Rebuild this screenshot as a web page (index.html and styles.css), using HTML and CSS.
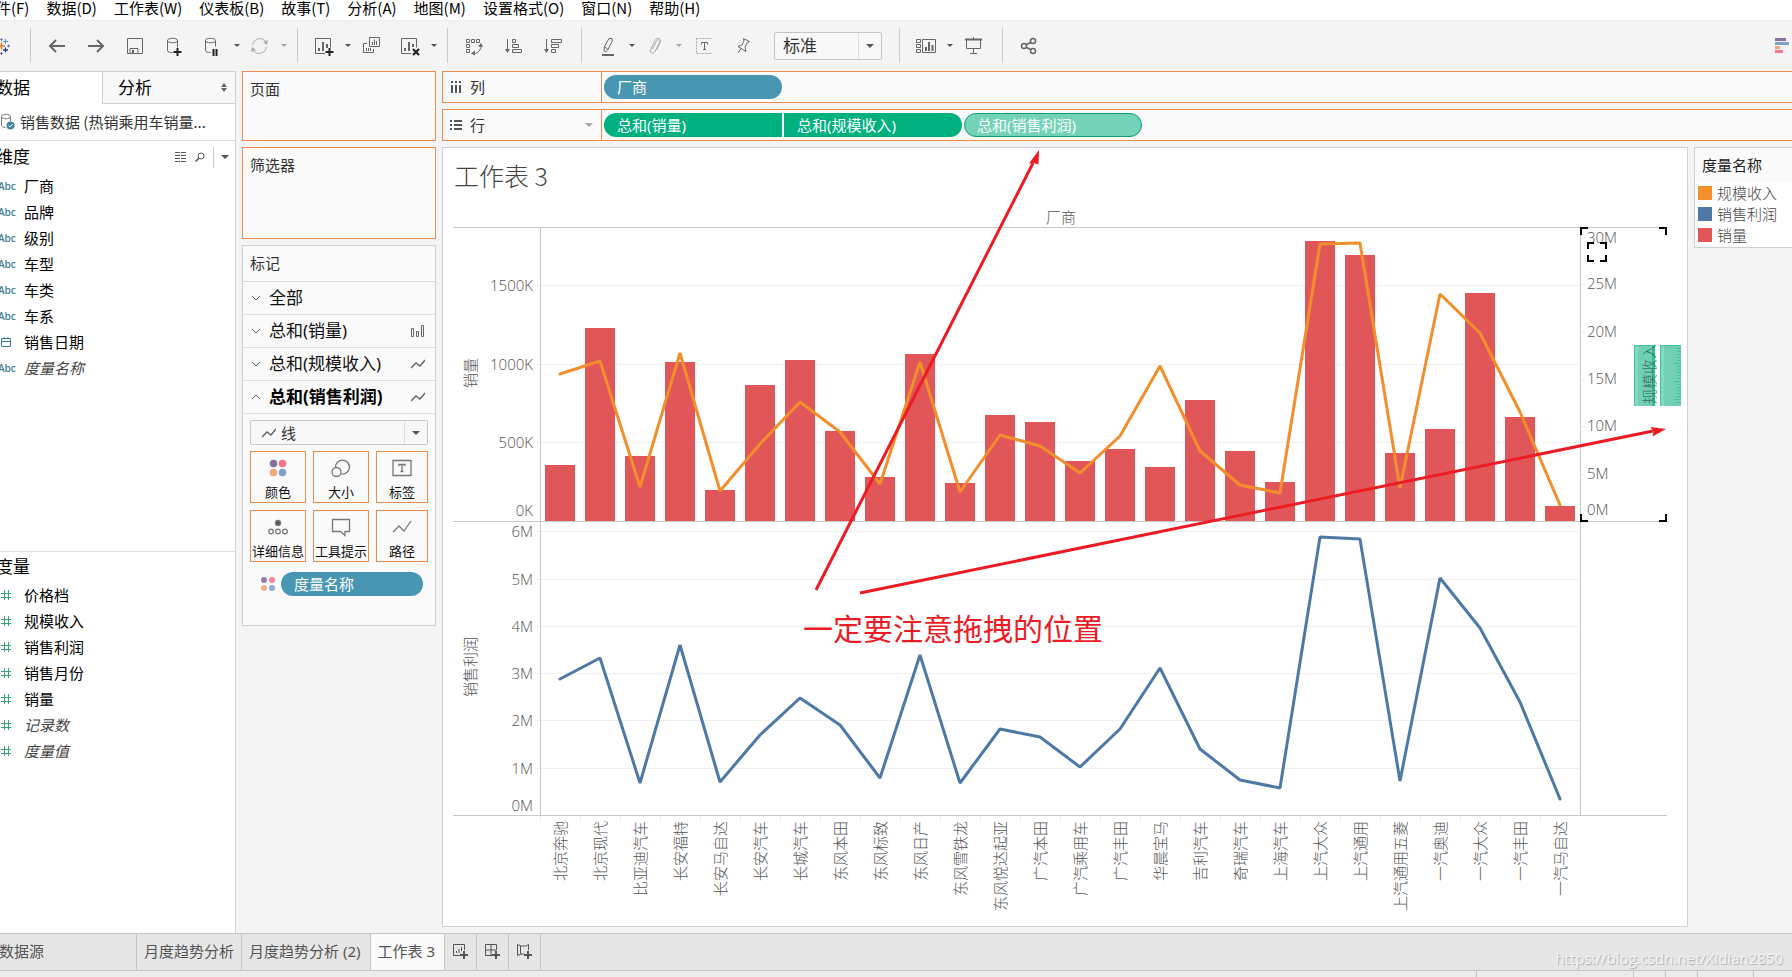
FILE: index.html
```html
<!DOCTYPE html>
<html lang="zh-CN">
<head>
<meta charset="utf-8">
<title>工作表 3</title>
<link rel="stylesheet" href="styles.css">
</head>
<body>
<div class="app">
  <nav class="menubar">
    <button>件(F)</button><button>数据(D)</button><button>工作表(W)</button><button>仪表板(B)</button><button>故事(T)</button><button>分析(A)</button><button>地图(M)</button><button>设置格式(O)</button><button>窗口(N)</button><button>帮助(H)</button>
  </nav>

  <div class="toolbar">
    <button class="logo" aria-label="开始页面"><svg width="12" height="22" viewBox="0 0 12 22"><path d="M0 11h5M1.500 7.500v7" stroke="#eb7b30" stroke-width="1.500"/><path d="M0 4.500h3M1.500 3v3" stroke="#6d87a8"/><path d="M3 6.500h5M5.500 4v5" stroke="#5b8fae"/><path d="M3 15h5M5.500 12.500v5" stroke="#1f447e" stroke-width="1.300"/><path d="M0 18.500h3M1.500 17v3" stroke="#7a6a93"/><path d="M7 11h3M8.500 9.500v3" stroke="#6a6fa8"/></svg></button>
    <span class="sep sep-first"></span>
    <button class="tb" aria-label="后退"><svg class="ic" viewBox="0 0 20 20"><path d="M18 10H3M9 4l-6 6 6 6" stroke-width="2"/></svg></button>
    <button class="tb" aria-label="前进"><svg class="ic" viewBox="0 0 20 20"><path d="M2 10h15M11 4l6 6-6 6" stroke-width="2"/></svg></button>
    <button class="tb" aria-label="保存"><svg class="ic" viewBox="0 0 20 20"><path d="M2.500 2.500h15v15h-15zM5 17.500v-5h8v5"/><path d="M7 14h2v3H7z" fill="#666" stroke="none"/></svg></button>
    <button class="tb" aria-label="新建数据源"><svg class="ic" viewBox="0 0 20 20"><path d="M3.500 4.500v10c0 1.500 2 2 5 2M13.500 4.500v7M3.500 4.500c0-3 10-3 10 0s-10 3-10 0"/><path d="M13.500 12v8M9.500 16h8" stroke="#222" stroke-width="2"/></svg></button>
    <button class="tb" aria-label="暂停自动更新"><svg class="ic" viewBox="0 0 20 20"><path d="M2.500 4.500v10c0 1.500 2 2 5 2M12.500 4.500v6M2.500 4.500c0-3 10-3 10 0s-10 3-10 0"/><path d="M10.500 13v7M13.500 13v7" stroke="#222" stroke-width="2"/></svg></button>
    <button class="cr" aria-label="更多更新选项"></button>
    <button class="tb off" aria-label="运行更新"><svg class="ic" viewBox="0 0 20 20"><path d="M2.500 9a7.500 7.500 0 0 1 13-4M16.500 11a7.500 7.500 0 0 1-13 4"/><path d="M18 4l-1 5-4-3zM1 16l1-5 4 3z" fill="#666" stroke="none"/></svg></button>
    <button class="cr off" aria-label="更多运行选项"></button>
    <span class="sep"></span>
    <button class="tb" aria-label="新建工作表"><svg class="ic" viewBox="0 0 20 20"><path d="M11 17.500H1.500v-15h15v9"/><path d="M5 12v3M9 6v9M13 8v4" stroke-width="2"/><path d="M15.500 12v8M11.500 16h8" stroke="#222" stroke-width="2"/></svg></button>
    <button class="cr" aria-label="更多新建选项"></button>
    <button class="tb" aria-label="复制"><svg class="ic" viewBox="0 0 20 20"><path d="M8.500 1.500h10v9h-10zM11.500 9V6M13.500 9V3.500M15.500 9V5M6 7.500H2.500v9h10V13M5.500 15v-3M7.500 15v-3M9.500 15v-3"/></svg></button>
    <button class="tb" aria-label="清除工作表"><svg class="ic" viewBox="0 0 20 20"><path d="M11 17.500H1.500v-15h15v9"/><path d="M5 12v3M9 6v9M13 8v3" stroke-width="2"/><path d="M13 13l6 6M19 13l-6 6" stroke="#222" stroke-width="2.200"/></svg></button>
    <button class="cr" aria-label="更多清除选项"></button>
    <span class="sep"></span>
    <button class="tb" aria-label="交换行和列"><svg class="ic" viewBox="0 0 20 20"><path d="M2.500 3.500h3v3h-3zM7.500 3.500h3v3h-3zM12.500 3.500h3v3h-3zM2.500 8.500h3v3h-3zM2.500 13.500h3v3h-3z"/><path d="M17 10c0 4-3 7-7 8"/><path d="M14 10.500l3-3.500 2 4zM7 17.500l4-3v5z" fill="#666" stroke="none"/></svg></button>
    <button class="tb" aria-label="升序排序"><svg class="ic" viewBox="0 0 20 20"><path d="M4.500 3v11"/><path d="M2 13h5l-2.500 4z" fill="#666"  stroke="none"/><path d="M9.500 3.500h3v3h-3zM9.500 8.500h6v3h-6zM9.500 13.500h9v3h-9z"/></svg></button>
    <button class="tb" aria-label="降序排序"><svg class="ic" viewBox="0 0 20 20"><path d="M4.500 3v11"/><path d="M2 13h5l-2.500 4z" fill="#666" stroke="none"/><path d="M9.500 3.500h10v3h-10zM9.500 8.500h7v3h-7zM9.500 13.500h4v3h-4z"/></svg></button>
    <span class="sep"></span>
    <button class="tb" aria-label="突出显示"><svg class="ic" viewBox="0 0 20 20"><path d="M6.500 10.500L11 2.500h3v3l-4 8-3.500-3-.5 4.500 1.500 1 2.500-2.500"/><path d="M4 19h12" stroke-width="2"/></svg></button>
    <button class="cr" aria-label="更多突出显示选项"></button>
    <button class="tb off" aria-label="组成员"><svg class="ic" viewBox="0 0 20 20"><path d="M7.500 13l4-8c1.500-2.500 4-.5 3 1.500l-4.500 9c-2 3.500-6 1.500-4.500-2l4.500-9c2-4 7-2 5 2.500l-3.500 7"/></svg></button>
    <button class="cr off" aria-label="更多组选项"></button>
    <button class="tb" aria-label="显示标记标签"><svg class="ic" viewBox="0 0 20 20"><path d="M4.500 2.500h16v15h-16z" stroke-dasharray="2 1" stroke="#aaa"/><path d="M9.500 8.500V6.500h6v2M12.500 6.500v7M11 13.500h3"/></svg></button>
    <button class="tb" aria-label="固定轴"><svg class="ic" viewBox="0 0 20 20"><path d="M12.500 2.500l6 3-2.500 1.500-2 4 1 4.500-8-5 4-1.500 2-4zM10 12.500l-3 4.500"/></svg></button>
    <span class="pick pick-fit"><select aria-label="适合"><option>标准</option><option>整个视图</option></select></span>
    <span class="sep sep-wide"></span>
    <button class="tb" aria-label="显示卡"><svg class="ic" viewBox="0 0 20 20"><path d="M.5 3.500h4v3h-4zM.5 8.500h4v3h-4zM.5 13.500h4v3h-4zM6.500 3.500h13v13h-13z"/><path d="M10 11v4M13 6v9M16.500 9v6" stroke-width="2"/></svg></button>
    <button class="cr" aria-label="更多卡选项"></button>
    <button class="tb" aria-label="演示模式"><svg class="ic" viewBox="0 0 20 20"><path d="M2 3.500h17" stroke-width="2"/><path d="M10.500 1v2M3.500 4v8.500h14V4M10.500 13v4M7 17.500h7"/></svg></button>
    <span class="sep"></span>
    <button class="tb" aria-label="共享"><svg class="ic" viewBox="0 0 20 20"><g stroke-width="1.500"><circle cx="5" cy="10" r="2.500"/><circle cx="14" cy="5" r="2.500"/><circle cx="14" cy="15" r="2.500"/><path d="M7 9l5-3M7 11l5 3"/></g></svg></button>
    <button class="showme" aria-label="智能推荐"><svg width="14" height="16" viewBox="0 0 14 16"><path fill="#86709a" d="M0 0h11v3H0z"/><path fill="#7ea1cc" d="M0 4h14v3H0z"/><path fill="#f5a77c" d="M0 8h5v3H0z"/><path fill="#f9748a" d="M0 12h8v3H0z"/></svg></button>
  </div>

  <div class="workspace">
    <aside class="data">
      <div class="tabs"><button class="on">数据</button><button>分析<svg width="6" height="9" viewBox="0 0 6 9"><path d="M0 4l3-4 3 4zM0 5l3 4 3-4z" fill="#666"/></svg></button></div>
      <div class="source"><svg width="15" height="18" viewBox="0 0 15 18"><path d="M1.500 3.500v9c0 1 2 2 4 2M10.500 3.500v5M1.500 3.500c0-3 9-3 9 0s-9 3-9 0" fill="none" stroke="#777"/><circle cx="10.500" cy="12.500" r="4" fill="#3f86a5"/><path d="M8.500 12.500l1.500 1.500 2.500-3" fill="none" stroke="#fff"/></svg><span>销售数据 (热销乘用车销量...</span></div>
      <section class="dims">
        <header><h2>维度</h2>
          <svg width="12" height="10" viewBox="0 0 12 10"><path d="M0 .5h12M0 3.500h12M0 6.500h12M0 9.500h12" stroke="#555" stroke-dasharray="3 0 2 1" stroke-width="1"/></svg>
          <svg width="10" height="10" viewBox="0 0 10 10"><circle cx="6" cy="4" r="3" fill="none" stroke="#555"/><path d="M4 6L.5 9.500" stroke="#555" stroke-width="1.500"/></svg>
          <button class="cr bar" aria-label="维度菜单"></button></header>
        <ul>
          <li><i>Abc</i>厂商</li><li><i>Abc</i>品牌</li><li><i>Abc</i>级别</li><li><i>Abc</i>车型</li><li><i>Abc</i>车类</li><li><i>Abc</i>车系</li>
          <li><svg class="fi cal" viewBox="0 0 12 12"><path d="M1.500 2.500h9v8h-9zM1.500 5.500h9M4 1v2M8 1v2"/></svg>销售日期</li>
          <li><i>Abc</i><em>度量名称</em></li>
        </ul>
      </section>
      <section class="meas">
        <header><h2>度量</h2></header>
        <ul>
          <li><svg class="fi" viewBox="0 0 12 12"><path d="M4.500 1v10M8.500 1v10M1 4.500h10M1 8.500h10"/></svg>价格档</li>
          <li><svg class="fi" viewBox="0 0 12 12"><path d="M4.500 1v10M8.500 1v10M1 4.500h10M1 8.500h10"/></svg>规模收入</li>
          <li><svg class="fi" viewBox="0 0 12 12"><path d="M4.500 1v10M8.500 1v10M1 4.500h10M1 8.500h10"/></svg>销售利润</li>
          <li><svg class="fi" viewBox="0 0 12 12"><path d="M4.500 1v10M8.500 1v10M1 4.500h10M1 8.500h10"/></svg>销售月份</li>
          <li><svg class="fi" viewBox="0 0 12 12"><path d="M4.500 1v10M8.500 1v10M1 4.500h10M1 8.500h10"/></svg>销量</li>
          <li><svg class="fi" viewBox="0 0 12 12"><path d="M4.500 1v10M8.500 1v10M1 4.500h10M1 8.500h10"/></svg><em>记录数</em></li>
          <li><svg class="fi" viewBox="0 0 12 12"><path d="M4.500 1v10M8.500 1v10M1 4.500h10M1 8.500h10"/></svg><em>度量值</em></li>
        </ul>
      </section>
    </aside>

    <div class="cards">
      <section class="card drop pages">页面</section>
      <section class="card drop filters">筛选器</section>
      <section class="card marks">
        <h3>标记</h3>
        <button class="layer"><svg class="chev" viewBox="0 0 10 6"><path d="M1 1l4 4 4-4"/></svg><span>全部</span></button>
        <button class="layer"><svg class="chev" viewBox="0 0 10 6"><path d="M1 1l4 4 4-4"/></svg><span>总和(销量)</span><svg class="mk" viewBox="0 0 14 14"><path d="M.5 4.500h2v8h-2zM5.500 7.500h2v5h-2zM10.500 1.500h2v11h-2z"/></svg></button>
        <button class="layer"><svg class="chev" viewBox="0 0 10 6"><path d="M1 1l4 4 4-4"/></svg><span>总和(规模收入)</span><svg class="mk" viewBox="0 0 14 14"><path d="M0 11l5-5 4 3 5-6" stroke-width="1.500"/></svg></button>
        <button class="layer cur"><svg class="chev" viewBox="0 0 10 6"><path d="M1 5l4-4 4 4"/></svg><span>总和(销售利润)</span><svg class="mk" viewBox="0 0 14 14"><path d="M0 11l5-5 4 3 5-6" stroke-width="1.500"/></svg></button>
        <div class="pick pick-mark"><svg class="mk" viewBox="0 0 14 14"><path d="M0 11l5-5 4 3 5-6" stroke-width="1.500"/></svg><select aria-label="标记类型"><option>线</option><option>条形图</option></select></div>
        <div class="props">
          <button><svg viewBox="0 0 20 20"><circle cx="5.500" cy="5.500" r="3.800" fill="#86709a"/><circle cx="14.500" cy="5.500" r="3.800" fill="#f9748a"/><circle cx="5.500" cy="14.500" r="3.800" fill="#f5a77c"/><circle cx="14.500" cy="14.500" r="3.800" fill="#7ea1cc"/></svg>颜色</button>
          <button><svg class="ln" viewBox="0 0 20 20"><path d="M4.500 9a7 7 0 1 1 6 7"/><circle cx="5.500" cy="14" r="4.500"/></svg>大小</button>
          <button><svg class="ln" viewBox="0 0 20 20"><path d="M1 2.500h18v15H1zM7 8V6.500h6V8M10 6.500v7M8.500 13.500h3"/></svg>标签</button>
          <button><svg class="ln" viewBox="0 0 20 20"><circle cx="10" cy="6" r="2.500" fill="#555"/><circle cx="3" cy="14.500" r="2.300"/><circle cx="10" cy="14.500" r="2.300"/><circle cx="17" cy="14.500" r="2.300"/></svg>详细信息</button>
          <button><svg class="ln" viewBox="0 0 20 20"><path d="M1.500 2.500h17v12H14v4l-4.500-4h-8z"/></svg>工具提示</button>
          <button><svg class="ln" viewBox="0 0 20 20"><path d="M1 15l6-6 5 5 7-10"/></svg>路径</button>
        </div>
        <div class="enc"><svg width="16" height="16" viewBox="0 0 16 16"><circle cx="4" cy="4" r="3" fill="#937fa5"/><circle cx="12" cy="4" r="3" fill="#f9849a"/><circle cx="4" cy="12" r="3" fill="#f5b08a"/><circle cx="12" cy="12" r="3" fill="#8eaed2"/></svg><button class="pill blue">度量名称</button></div>
      </section>
    </div>

    <main class="main">
      <div class="shelf"><div class="shelf-name"><svg width="12" height="12" viewBox="0 0 12 12"><path d="M2 0v2M6 0v2M10 0v2M2 4v8M6 4v8M10 4v8" stroke="#555" stroke-width="2"/></svg>列</div><div class="pills"><button class="pill blue">厂商</button></div></div>
      <div class="shelf"><div class="shelf-name"><svg width="12" height="12" viewBox="0 0 12 12"><path d="M0 2h2M0 6h2M0 10h2M4 2h8M4 6h8M4 10h8" stroke="#555" stroke-width="2"/></svg>行<button class="cr big" aria-label="行菜单"></button></div><div class="pills"><button class="pill green left">总和(销量)</button><button class="pill green right">总和(规模收入)</button><button class="pill drag">总和(销售利润)</button></div></div>
      <div class="stage">
        <section class="view">
          <h1>工作表 3</h1>
          <svg class="chart" id="chart" viewBox="443 203 1244 723" role="img" aria-label="厂商销量、规模收入与销售利润"></svg>
          <svg class="notes" viewBox="443 148 1244 778">
            <g stroke="#ed1c24" stroke-width="3"><path d="M816 590L1033 163M860 593L1653 431"/></g>
            <path fill="#ed1c24" d="M1039 150l-.5 14.500-4.500-1.500-5 .5zM1666 429l-13.500 7.500 1-5-3-4.500z"/>
            <text x="803" y="640">一定要注意拖拽的位置</text>
          </svg>
        </section>
        <section class="legend">
          <h3>度量名称</h3>
          <ul><li><b class="sw orange"></b>规模收入</li><li><b class="sw navy"></b>销售利润</li><li><b class="sw red"></b>销量</li></ul>
        </section>
      </div>
    </main>
  </div>

  <footer class="sheets">
    <button class="src">数据源</button><button>月度趋势分析</button><button class="wide">月度趋势分析 (2)</button><button class="wide on">工作表 3</button>
    <button class="add" aria-label="新建工作表"><svg viewBox="0 0 16 16"><path d="M8 12.500H1.500v-11h11V7M4.500 10V8M7 10V6M9.500 8V4"/><path d="M12 8v8M8 12h8" stroke-width="2"/></svg></button>
    <button class="add" aria-label="新建仪表板"><svg viewBox="0 0 16 16"><path d="M8 12.500H1.500v-11h11V7M7 1.500v11M1.500 7h11"/><path d="M12 8v8M8 12h8" stroke-width="2"/></svg></button>
    <button class="add" aria-label="新建故事"><svg viewBox="0 0 16 16"><path d="M12.500 7V1.500L10 3H5L1.500 1.500v11L5 11h3M4.500 3v8"/><path d="M12 8v8M8 12h8" stroke-width="2"/></svg></button>
    <span class="mark">https://blog.csdn.net/Xidian2850</span>
  </footer>
  <div class="status"><span class="s1"></span><span class="s2"></span><span class="s3"></span><span class="s4"></span><span class="s5"></span></div>
</div>
<script src="chart.js"></script>
</body>
</html>
```

FILE: styles.css
```css
* { box-sizing: border-box; }
body { margin: 0; background: #f4f4f4; color: #000; font: 15px/20px "Noto Sans", "Noto Sans CJK SC", sans-serif; overflow: hidden; }
button { border: 0; padding: 0; margin: 0; background: none; font: inherit; color: inherit; white-space: nowrap; }
h1, h2, h3, ul { margin: 0; padding: 0; font-weight: 400; list-style: none; }
svg { display: block; flex: none; }
.app { display: flex; flex-direction: column; min-height: 100vh; }

.menubar { display: flex; gap: 17px; height: 20px; padding-bottom: 4px; background: #fff; align-items: center; font-family: "Noto Sans CJK SC", sans-serif; }
.menubar button:first-child { margin-left: -4px; }

.toolbar { display: flex; align-items: center; height: 51px; padding-bottom: 1px; border-top: 1px solid #eee; color: #555; }
.logo { width: 30px; }
.sep { width: 1px; height: 35px; margin: 0 6px 0 10px; background: #ccc; }
.sep-first { margin-left: 0; }
.sep-wide { margin-left: 17px; }
.tb { width: 39px; display: flex; justify-content: center; }
.ic { width: 20px; height: 20px; fill: none; stroke: #666; }
.off { opacity: .5; }
.cr { width: 9px; height: 20px; display: flex; align-items: center; justify-content: center; }
.toolbar .cr { margin-right: -1px; }
.cr::before, .pick::after { content: ""; border: 3px solid transparent; border-top: 3px solid #555; border-bottom: 0; }
.bar::before, .big::before, .pick::after { border-width: 4px 4px 0; }
.pick { display: flex; align-items: center; border: 1px solid #c6c6c6; border-radius: 2px; background: #f8f8f8; position: relative; }
.pick::after { position: absolute; right: 7px; }
.pick select { appearance: none; border: 0; border-right: 1px solid #ddd; background: none; font: inherit; color: #333; flex: 1; height: 100%; padding: 0; margin-right: 22px; }
.pick-fit { width: 108px; height: 28px; margin-left: 14px; font-size: 17px; }
.pick-fit select { padding-left: 8px; }
.showme { margin: 0 3px 0 auto; }

.workspace { flex: 1; display: flex; gap: 6px; }
.data { width: 236px; flex: none; background: #fff; border: 1px solid #d0d0d0; border-width: 1px 1px 0 0; }
.tabs { display: flex; height: 32px; font-size: 17px; }
.tabs .on { width: 102px; text-align: left; text-indent: -4px; }
.tabs button:last-child { flex: 1; display: flex; align-items: center; justify-content: space-between; padding: 0 8px 0 15px; background: #f8f8f8; border: 1px solid #d0d0d0; border-width: 0 0 1px 1px; }
.source { display: flex; align-items: center; gap: 5px; height: 37px; padding-bottom: 1px; border-bottom: 1px solid #ddd; color: #333; white-space: nowrap; font-family: "Noto Sans CJK SC", sans-serif; }
.data header { display: flex; align-items: center; height: 32px; gap: 8px; }
.data h2 { font-size: 17px; line-height: 24px; flex: 1; margin-left: -4px; }
.data .bar { width: 22px; height: 21px; border-left: 1px solid #ccc; }
.dims { height: 411px; border-bottom: 1px solid #ddd; }
.data li { display: flex; align-items: center; height: 26px; }
.data i { width: 24px; font: 600 10px/12px "Open Sans", sans-serif; color: #3f7f96; text-indent: -2px; }
.data em { color: #444; }
.fi { width: 12px; height: 12px; margin-right: 12px; fill: none; stroke: #3ba272; }
.cal { stroke: #3f7f96; }
.meas header { height: 30px; }

.cards { width: 194px; flex: none; display: flex; flex-direction: column; gap: 6px; color: #333; }
.card { background: #fafafa; border: 1px solid #d0d0d0; }
.drop { border-color: #ea8c50; padding: 7px; }
.pages { height: 70px; }
.filters { height: 92px; }
.marks { height: 381px; }
.marks h3 { font-size: 15px; height: 36px; padding: 7px; border-bottom: 1px solid #ddd; }
.layer { display: flex; align-items: center; width: 100%; height: 33px; padding: 0 10px 0 8px; border-bottom: 1px solid #e0e0e0; color: #111; font-size: 17px; line-height: 24px; text-align: left; }
.layer span { flex: 1; margin-left: 8px; }
.cur { font-weight: 700; color: #000; }
.chev { width: 10px; height: 6px; fill: none; stroke: #666; }
.mk { width: 14px; height: 14px; fill: none; stroke: #666; }
.pick-mark { height: 25px; margin: 6px 7px; padding-left: 11px; gap: 5px; }
.props { display: grid; grid-template-columns: 56px 56px 52px; gap: 7px; padding: 0 7px; }
.props button { height: 52px; border: 1px solid #ea8c50; font-size: 13px; line-height: 18px; color: #111; display: flex; flex-direction: column; align-items: center; gap: 5px; padding-top: 6px; }
.props svg { width: 20px; height: 20px; }
.props .ln { fill: none; stroke: #777; stroke-width: 1.3; }
.enc { display: flex; align-items: center; gap: 5px; padding: 10px 12px 0 17px; }
.pill { height: 24px; border-radius: 12px; padding-left: 13px; color: #fff; text-align: left; width: 178px; }
.enc .pill { flex: 1; }
.blue { background: #4996b2; }
.green { background: #00b180; }
.left { border-radius: 12px 0 0 12px; }
.right { border-radius: 0 12px 12px 0; }
.drag { background: #73d2b8; border: 1px solid #0a9e73; padding-left: 12px; }

.main { flex: 1; min-width: 0; display: flex; flex-direction: column; gap: 6px; }
.shelf { display: flex; height: 32px; background: #fafafa; border: 1px solid #ea8c50; border-right: 0; color: #333; }
.shelf-name { width: 159px; display: flex; align-items: center; gap: 8px; padding: 0 8px 0 7px; border-right: 1px solid #ea8c50; }
.shelf-name .cr { margin-left: auto; opacity: .5; }
.pills { display: flex; gap: 2px; align-items: center; padding-left: 2px; }
.stage { display: flex; gap: 6px; align-items: flex-start; }
.view { flex: 1; min-width: 0; position: relative; background: #fff; border: 1px solid #d0d0d0; }
.view h1 { font: 300 25px/36px "Noto Sans CJK SC", sans-serif; color: #444; padding: 9px 11px 10px; }
.chart { width: 100%; }
.notes { position: absolute; inset: 0; width: 100%; pointer-events: none; }
.notes text { fill: #ed1c24; font-size: 30px; }
.chart text { font-family: "Noto Sans CJK SC", sans-serif; font-size: 15px; font-weight: 300; fill: #555; }
.chart .num { font-family: "Open Sans", sans-serif; }
.legend { width: 98px; flex: none; background: #fff; border: 1px solid #d0d0d0; border-right: 0; padding-bottom: 2px; white-space: nowrap; }
.legend h3 { font-size: 15px; height: 34px; padding: 7px; background: #fafafa; color: #222; }
.legend li { display: flex; align-items: center; gap: 5px; height: 21px; padding-left: 3px; color: #444; font-family: "Noto Sans CJK SC", sans-serif; font-weight: 300; }
.sw { width: 14px; height: 14px; }
.orange { background: #f28e2b; }
.navy { background: #4e79a7; }
.red { background: #e15759; }

.sheets { display: flex; height: 38px; background: #e6e6e6; border: 1px solid #c4c4c4; border-width: 1px 0; color: #555; }
.sheets button { padding: 0 7px 2px; border-right: 1px solid #c4c4c4; }
.sheets .src { width: 137px; padding-left: 0; text-align: left; text-indent: -1px; }
.sheets .wide { padding-right: 9px; }
.sheets .on { background: #fafafa; }
.sheets .add { width: 32px; }
.add svg { width: 16px; height: 16px; margin: auto; fill: none; stroke: #555; }
.mark { margin: 14px 9px 0 auto; font: 15px/20px "Open Sans", sans-serif; color: #f4f4f4; text-shadow: 1px 1px 1px #aaa; }
.status { display: flex; justify-content: flex-end; height: 6px; background: #ececec; }
.status span { border-left: 1px solid #c4c4c4; }
.s1 { width: 157px; }
.s2, .s3 { width: 32px; }
.s4 { width: 56px; }
.s5 { width: 39px; }
```

FILE: chart.js
```js
const svg = document.getElementById("chart");
const NS = "http://www.w3.org/2000/svg";
const add = (tag, attrs, text) => {
  const el = document.createElementNS(NS, tag);
  for (const k in attrs) el.setAttribute(k, attrs[k]);
  if (text) el.textContent = text;
  svg.appendChild(el);
};
const path = (d, stroke, width = 1) => add("path", { d, stroke, fill: "none", "stroke-width": width });

const makers = ["北京奔驰", "北京现代", "比亚迪汽车", "长安福特", "长安马自达", "长安汽车", "长城汽车", "东风本田", "东风标致", "东风日产", "东风雪铁龙", "东风悦达起亚", "广汽本田", "广汽乘用车", "广汽丰田", "华晨宝马", "吉利汽车", "奇瑞汽车", "上海汽车", "上汽大众", "上汽通用", "上汽通用五菱", "一汽奥迪", "一汽大众", "一汽丰田", "一汽马自达"];
const bars = [465, 328, 456, 362, 490, 385, 360, 431, 477, 354, 483, 415, 422, 461, 449, 467, 400, 451, 482, 241, 255, 453, 429, 293, 417, 506];
const income = [374, 361, 487, 353, 491, 444, 402, 432, 484, 362, 492, 435, 446, 473, 436, 366, 451, 485, 493, 244, 243, 488, 294, 333, 412, 505];
const profit = [679, 658, 783, 645, 782, 735, 698, 725, 778, 655, 783, 729, 737, 767, 729, 668, 749, 780, 788, 537, 539, 781, 578, 628, 702, 799];

const LEFT = 540, STEP = 40, RIGHT = LEFT + STEP * 26;
const centre = i => LEFT + STEP * i + STEP / 2;
const line = (values, stroke) => add("path", {
  d: "M" + values.map((y, i) => centre(i) + " " + y).join("L"),
  stroke, fill: "none", "stroke-width": 3, "stroke-linejoin": "bevel", "stroke-linecap": "round"
});

const leftAxis = [["1500K", 285], ["1000K", 364], ["500K", 442], ["0K", 510], ["6M", 531], ["5M", 579], ["4M", 626], ["3M", 673], ["2M", 720], ["1M", 768], ["0M", 805]];
leftAxis.forEach(([label, y]) => {
  if (label !== "0K" && label !== "0M") path(`M${LEFT - 5} ${y + .5}H${RIGHT}`, "#f0f0f0");
  add("text", { x: 533, y: y + 6, class: "num", "text-anchor": "end" }, label);
});
[["30M", 238], ["25M", 284], ["20M", 332], ["15M", 379], ["10M", 426], ["5M", 474], ["0M", 510]].forEach(([label, y]) => {
  if (label !== "0M") path(`M${RIGHT + 1} ${y + .5}h4`, "#eee");
  add("text", { x: 1587, y: y + 5, class: "num" }, label);
});

bars.forEach((y, i) => add("rect", { x: centre(i) - 15, y, width: 30, height: 521 - y, fill: "#e15759" }));
path("M453 227.5H1667M453 521.5H1667M453 815.5H1667M540.5 227V815M1580.5 227V815", "#c8c8c8");
line(income, "#f28e2b");
line(profit, "#4e79a7");

makers.forEach((name, i) => {
  path(`M${LEFT + STEP * i + .5} 816v4`, "#e8e8e8");
  add("text", { transform: `translate(${centre(i) + 6} 821) rotate(-90)`, "text-anchor": "end" }, name);
});
add("text", { x: 1061, y: 223, "text-anchor": "middle" }, "厂商");
add("text", { transform: "translate(476 373) rotate(-90)", "text-anchor": "middle" }, "销量");
add("text", { transform: "translate(476 667) rotate(-90)", "text-anchor": "middle" }, "销售利润");

const corners = (x1, y1, x2, y2, n) => path(`M${x1} ${y1 + n}V${y1}H${x1 + n}M${x2 - n} ${y1}H${x2}V${y1 + n}M${x2} ${y2 - n}V${y2}H${x2 - n}M${x1 + n} ${y2}H${x1}V${y2 - n}`, "#000", 2);
corners(1581, 228, 1666, 521, 7);
corners(1588, 243, 1606, 261, 6);

[1634, 1660].forEach(x => {
  add("rect", { x, y: 345, width: 21, height: 61, fill: "#73cfb3" });
  add("rect", { x, y: 345, width: 4, height: 61, fill: "#82dac2" });
  path(`M${x + .5} 406V345.5H${x + 21}`, "#3cc39b");
});
for (let i = 0; i < 19; i++) path(`M1681 ${348.5 + i * 3}h${i % 6 === 5 ? -7 : -4}`, "#3cc39b");
path("M1653.5 346v60", "#2fbf95", 3);
add("text", { transform: "translate(1655 374) rotate(-90)", "text-anchor": "middle", style: "fill:#2d7663" }, "规模收入");
```
